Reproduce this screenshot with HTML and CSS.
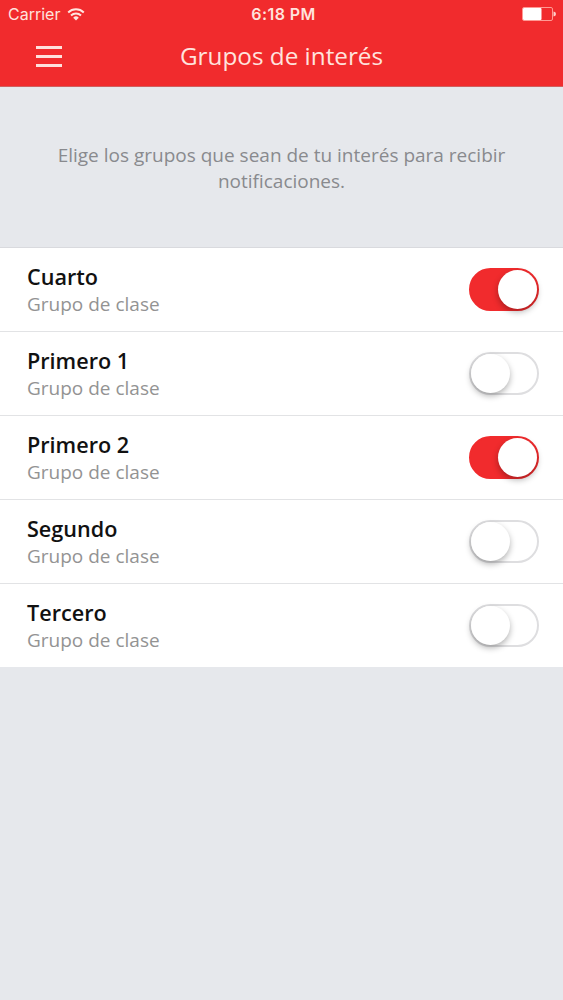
FILE: index.html
```html
<!DOCTYPE html>
<html lang="es">
<head>
  <meta charset="UTF-8">
  <meta name="viewport" content="width=device-width, initial-scale=1.0">
  <title>Grupos de interés</title>
  <link rel="stylesheet" href="styles.css">
</head>
<body>
  <header class="header">
    <div class="status">
      <div class="carrier">
        <span>Carrier</span>
        <svg class="wifi" width="18" height="13" viewBox="0 0 18 13">
          <path d="M1.2 4.4a11.4 11.4 0 0 1 15.6 0M4 7.5a7.3 7.3 0 0 1 10 0" fill="none" stroke="#ffe6e0" stroke-width="2"/>
          <path d="M9 12.6L6.2 9.7a4 4 0 0 1 5.6 0z" fill="#ffe6e0"/>
        </svg>
      </div>
      <span class="time">6:18 PM</span>
      <div class="battery-box">
        <svg class="battery" width="34" height="14" viewBox="0 0 34 14">
          <rect x="0.5" y="0.5" width="30" height="13" rx="1.5" fill="none" stroke="#ff9a94"/>
          <rect x="1" y="1" width="18.5" height="12" rx="1" fill="#fff"/>
          <path d="M31.5 4.5a2.5 2.5 0 0 1 0 5z" fill="#ffd0ca"/>
        </svg>
      </div>
    </div>
    <div class="navbar">
      <button class="menu" aria-label="Menú">
        <span></span>
        <span></span>
        <span></span>
      </button>
      <h1 class="title">Grupos de interés</h1>
    </div>
  </header>

  <p class="intro">Elige los grupos que sean de tu interés para recibir notificaciones.</p>

  <ul class="list">
    <li class="item">
      <div>
        <h2 class="name">Cuarto</h2>
        <p class="type">Grupo de clase</p>
      </div>
      <button class="toggle on" aria-label="Cuarto"><span class="knob"></span></button>
    </li>
    <li class="item">
      <div>
        <h2 class="name">Primero 1</h2>
        <p class="type">Grupo de clase</p>
      </div>
      <button class="toggle" aria-label="Primero 1"><span class="knob"></span></button>
    </li>
    <li class="item">
      <div>
        <h2 class="name">Primero 2</h2>
        <p class="type">Grupo de clase</p>
      </div>
      <button class="toggle on" aria-label="Primero 2"><span class="knob"></span></button>
    </li>
    <li class="item">
      <div>
        <h2 class="name">Segundo</h2>
        <p class="type">Grupo de clase</p>
      </div>
      <button class="toggle" aria-label="Segundo"><span class="knob"></span></button>
    </li>
    <li class="item">
      <div>
        <h2 class="name">Tercero</h2>
        <p class="type">Grupo de clase</p>
      </div>
      <button class="toggle" aria-label="Tercero"><span class="knob"></span></button>
    </li>
  </ul>

  <script>
    document.querySelectorAll('.toggle').forEach((toggle) => {
      toggle.addEventListener('click', () => {
        toggle.classList.toggle('on');
      });
    });
  </script>
</body>
</html>
```
FILE: styles.css
```css
*{
  box-sizing: border-box;
}
body{
  margin: 0;
  min-height: 100vh;
  background-color: #e6e8ec;
  font-family: 'Open Sans', sans-serif;
}
h1, h2, p, ul{
  margin: 0;
  padding: 0;
}
button{
  border: none;
  cursor: pointer;
}
.header{
  height: 87px;
  background-color: #f12b2d;
  border-bottom: 1px solid #d0605f;
  color: #ffe3dd;
}
.status{
  display: grid;
  grid-template-columns: 1fr auto 1fr;
  align-items: center;
  height: 28px;
  padding: 0 7px 0 8px;
  font-family: Inter, sans-serif;
  font-size: 16px;
}
.carrier{
  display: flex;
  align-items: center;
  gap: 7px;
}
.time{
  padding-left: 3px;
  font-weight: 600;
  letter-spacing: 0.4px;
}
.battery-box{
  display: flex;
  justify-content: flex-end;
}
.navbar{
  display: grid;
  grid-template-columns: 80px 1fr 80px;
  align-items: center;
  height: 56px;
}
.menu{
  display: flex;
  flex-direction: column;
  gap: 6px;
  width: 26px;
  margin-left: 36px;
  padding: 0;
  background-color: transparent;
}
.menu span{
  height: 3px;
  background-color: #ffe0dc;
}
.title{
  padding-bottom: 2px;
  font-size: 24.3px;
  font-weight: 400;
  text-align: center;
}
.intro{
  height: 160px;
  padding: 55px 40px 0;
  color: #898a8e;
  font-size: 19px;
  line-height: 26px;
  text-align: center;
}
.list{
  list-style: none;
  border-top: 1px solid #d9dade;
}
.item{
  display: flex;
  justify-content: space-between;
  align-items: center;
  height: 83.9px;
  padding: 1px 24px 0 27px;
  background-color: #fff;
  border-bottom: 1px solid #e2e3e5;
}
.item:last-child{
  border-bottom-color: #fff;
}
.name{
  color: #111;
  font-size: 21.6px;
  font-weight: 600;
  line-height: 29px;
}
.type{
  color: #939393;
  font-size: 19px;
  line-height: 27px;
}
.toggle{
  display: flex;
  align-items: center;
  width: 70px;
  height: 43px;
  padding: 0;
  border: 2px solid #dedee0;
  border-radius: 22px;
  background-color: #fff;
}
.knob{
  width: 39px;
  height: 39px;
  border-radius: 50%;
  background-color: #fff;
  box-shadow: 0 3px 6px rgba(0, 0, 0, 0.3);
}
.on{
  justify-content: flex-end;
  border-color: #f12b2d;
  background-color: #f12b2d;
}
```
